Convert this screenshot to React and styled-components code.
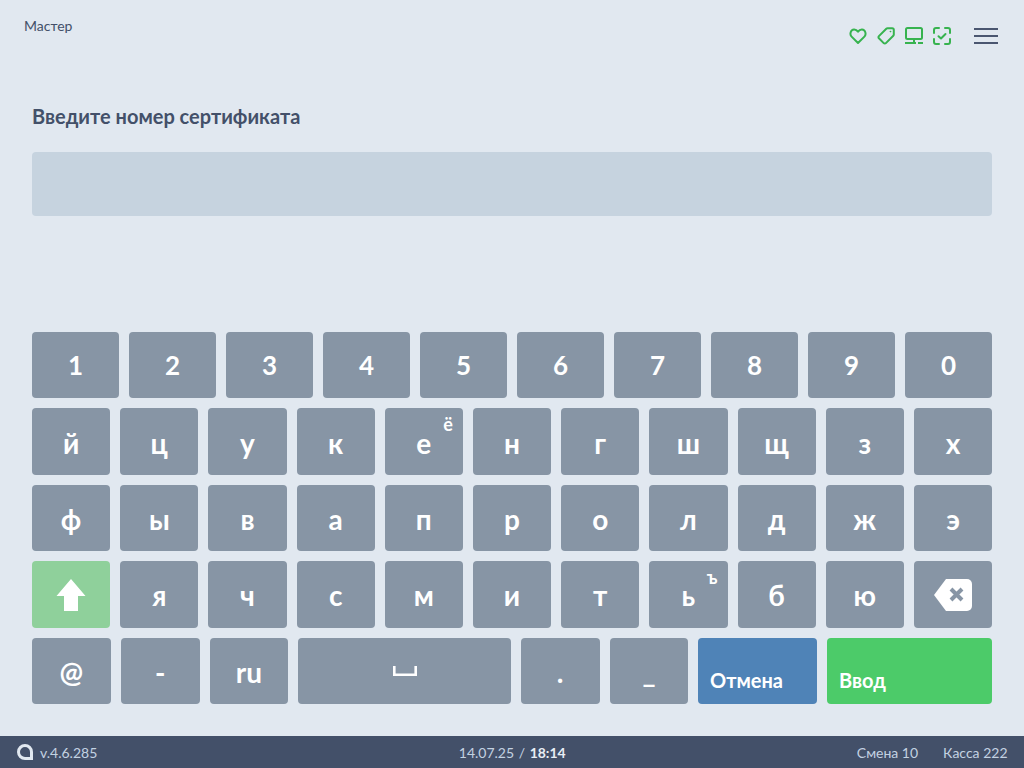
import React from 'react';
import styled, { createGlobalStyle } from 'styled-components';

const Global = createGlobalStyle`
  html, body { margin: 0; padding: 0; height: 100%; }
  body { background: #e1e8f0; font-family: Lato, "Noto Sans", sans-serif; }
  * { box-sizing: border-box; }
`;

const Page = styled.div`
  display: flex;
  flex-direction: column;
  height: 768px;
  overflow: hidden;
`;

const Header = styled.header`
  display: flex;
  justify-content: space-between;
  align-items: flex-start;
  height: 68px;
  padding: 18px 26px 0 24px;
`;

const Mode = styled.div`
  font-size: 14px;
  line-height: 16px;
  color: #435069;
`;

const Tools = styled.div`
  display: flex;
  align-items: center;
  gap: 10px;
  margin-top: 9px;
`;

const Burger = styled.div`
  display: flex;
  flex-direction: column;
  gap: 5px;
  width: 24px;
  margin-left: 13px;

  span {
    height: 2px;
    background: #4a5670;
  }
`;

const Main = styled.main`
  flex: 1;
  display: flex;
  flex-direction: column;
  padding: 0 32px 32px;
`;

const Title = styled.h1`
  margin: 35px 0 0;
  font-size: 20px;
  line-height: 26px;
  font-weight: 700;
  color: #435069;
`;

const Field = styled.div`
  height: 64px;
  margin-top: 23px;
  background: #c6d3df;
  border-radius: 4px;
`;

const Keyboard = styled.div`
  margin-top: auto;
  display: grid;
  grid-auto-rows: 1fr;
  gap: 10px;
  height: 372px;
`;

const Row = styled.div`
  display: flex;
  gap: 10px;
`;

const Key = styled.button`
  position: relative;
  flex: ${(p) => (p.$width ? `0 0 ${p.$width}px` : '1 1 0')};
  min-width: 0;
  display: flex;
  align-items: center;
  justify-content: center;
  padding: ${(p) => (p.$flat ? 0 : '2px 0 0')};
  border: 0;
  border-radius: 4px;
  background: ${(p) => p.$bg || '#8795a5'};
  color: #fff;
  font-family: inherit;
  font-size: ${(p) => p.$size || 28}px;
  font-weight: 700;
`;

const Action = styled(Key)`
  justify-content: flex-start;
  align-items: flex-end;
  padding: 0 12px 11px ${(p) => p.$inset || 12}px;
  font-size: 20px;
  line-height: 26px;
`;

const Alt = styled.span`
  position: absolute;
  top: 6px;
  right: 10px;
  font-size: 18px;
  line-height: 20px;
  font-weight: 700;
`;

const Footer = styled.footer`
  display: grid;
  grid-template-columns: 1fr auto 1fr;
  align-items: center;
  height: 32px;
  padding: 0 16.5px 0 17px;
  background: #435069;
  color: #c3d2e2;
  font-size: 14px;
`;

const Version = styled.div`
  display: flex;
  align-items: center;
  gap: 7px;
`;

const Stamp = styled.div`
  b { color: #e8eef5; }
`;

const Slash = styled.span`
  margin: 0 1px;
`;

const Shifts = styled.div`
  display: flex;
  justify-content: flex-end;
  gap: 25px;
`;

const GREEN = '#37b34f';

const Icon = ({ children }) => (
  <svg width="18" height="18" viewBox="0 0 18 18" fill="none" stroke={GREEN} strokeWidth="2" strokeLinecap="round" strokeLinejoin="round">
    {children}
  </svg>
);

const HeartIcon = () => (
  <Icon><path d="M9 16 2.6 9.6C.4 7.4 1.6 2.6 5 2.4c1.7-.1 3 .8 4 2.2 1-1.4 2.3-2.3 4-2.2 3.4.2 4.6 5 2.4 7.2L9 16Z" /></Icon>
);

const TagIcon = () => (
  <Icon>
    <path d="M10.5 1.2h4.7c.9 0 1.6.7 1.6 1.6v4.7c0 .5-.2.9-.5 1.2l-7.4 7.4c-.6.6-1.6.6-2.2 0L1.9 11.3c-.6-.6-.6-1.6 0-2.2l7.4-7.4c.3-.3.8-.5 1.2-.5Z" />
    <circle cx="13.3" cy="4.6" r=".4" strokeWidth="1" />
  </Icon>
);

const MonitorIcon = () => (
  <Icon>
    <rect x="1" y="1" width="16" height="11" rx="1.5" />
    <path d="M9 12v4M0 16h11M13 16h5" strokeLinecap="butt" />
  </Icon>
);

const ScanIcon = () => (
  <Icon>
    <path d="M6 1H3a2 2 0 0 0-2 2v3M12 1h3a2 2 0 0 1 2 2v3M6 17H3a2 2 0 0 1-2-2v-3M12 17h3a2 2 0 0 0 2-2v-3" />
    <path d="m5.5 9.2 2.5 2.3 4.5-4.5" />
  </Icon>
);

const LogoIcon = () => (
  <svg width="16" height="16" viewBox="0 0 16 16" fill="none" stroke="#e1e8f0" strokeWidth="3">
    <path d="M14.5 14.5H8A6.5 6.5 0 1 1 14.5 8v6.5Z" />
  </svg>
);

const ShiftIcon = () => (
  <svg width="30" height="32" viewBox="0 0 30 32" fill="#fff">
    <path d="M15 0 29.5 17H22v15H8V17H.5L15 0Z" />
  </svg>
);

const BackspaceIcon = () => (
  <svg width="38" height="32" viewBox="0 0 38 32">
    <path fill="#fff" d="M12 0h21a5 5 0 0 1 5 5v22a5 5 0 0 1-5 5H12L0 16 12 0Z" />
    <path stroke="#8795a5" strokeWidth="4" d="m17 10 11 11M28 10 17 21" />
  </svg>
);

const SpaceIcon = () => (
  <svg width="24" height="10" viewBox="0 0 24 10" fill="none" stroke="#fff" strokeWidth="2.6">
    <path d="M1.3 0v8.7h21.4V0" />
  </svg>
);

const digits = '1234567890'.split('');
const letterRows = [
  ['й', 'ц', 'у', 'к', 'е', 'н', 'г', 'ш', 'щ', 'з', 'х'],
  ['ф', 'ы', 'в', 'а', 'п', 'р', 'о', 'л', 'д', 'ж', 'э'],
];
const lowerRow = ['я', 'ч', 'с', 'м', 'и', 'т', 'ь', 'б', 'ю'];
const alts = { е: 'ё', ь: 'ъ' };

const Letter = ({ value }) => (
  <Key>
    {value}
    {alts[value] && <Alt>{alts[value]}</Alt>}
  </Key>
);

export default function App() {
  return (
    <Page>
      <Global />
      <Header>
        <Mode>Мастер</Mode>
        <Tools>
          <HeartIcon />
          <TagIcon />
          <MonitorIcon />
          <ScanIcon />
          <Burger><span /><span /><span /></Burger>
        </Tools>
      </Header>
      <Main>
        <Title>Введите номер сертификата</Title>
        <Field />
        <Keyboard>
          <Row>{digits.map((d) => <Key key={d} $flat $size={26}>{d}</Key>)}</Row>
          {letterRows.map((row) => (
            <Row key={row[0]}>{row.map((l) => <Letter key={l} value={l} />)}</Row>
          ))}
          <Row>
            <Key $bg="#8fd09b"><ShiftIcon /></Key>
            {lowerRow.map((l) => <Letter key={l} value={l} />)}
            <Key><BackspaceIcon /></Key>
          </Row>
          <Row>
            <Key>@</Key>
            <Key>-</Key>
            <Key>ru</Key>
            <Key $width={212.4} $flat><SpaceIcon /></Key>
            <Key>.</Key>
            <Key>_</Key>
            <Action $width={118.6} $inset={11.6} $bg="#4f83b7">Отмена</Action>
            <Action $width={165} $bg="#4ccb69">Ввод</Action>
          </Row>
        </Keyboard>
      </Main>
      <Footer>
        <Version><LogoIcon />v.4.6.285</Version>
        <Stamp>14.07.25 <Slash>/</Slash> <b>18:14</b></Stamp>
        <Shifts><span>Смена 10</span><span>Касса 222</span></Shifts>
      </Footer>
    </Page>
  );
}
